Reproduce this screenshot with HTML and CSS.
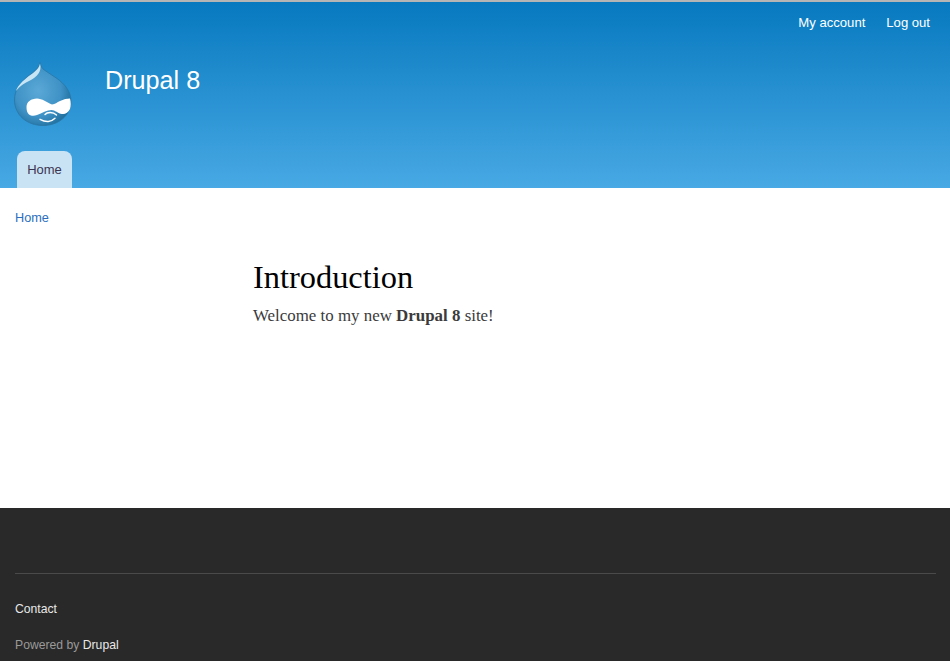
FILE: index.html
```html
<!DOCTYPE html>
<html lang="en">
<head>
<meta charset="utf-8">
<title>Drupal 8</title>
<link rel="stylesheet" href="styles.css">
</head>
<body>
<div class="chrome-line"></div>
<header class="header">
  <nav class="secondary"><a href="#">My account</a><a href="#">Log out</a></nav>
  <div class="branding">
    <svg class="logo" width="58" height="66" viewBox="0 0 58 66">
      <defs>
        <radialGradient id="drop" cx="0.42" cy="0.45" r="0.62">
          <stop offset="0" stop-color="#5aa8d6"/>
          <stop offset="0.65" stop-color="#3f92c6"/>
          <stop offset="1" stop-color="#1f6f9e"/>
        </radialGradient>
      </defs>
      <path d="M26 2.500C26.500 6 28 8.500 31 10.500C35 13.500 39 15.500 43 18.500C50 23.500 57 31 57 41C57 55 45 65.500 29 65.500C13 65.500 0.500 55 0.500 40C0.500 30 6 23 13 17C18 13 25 9 26 2.500Z" fill="url(#drop)" stroke="#2a76a6" stroke-width="0.800"/>
      <path d="M26 3.500C25 10 18 13.500 12.500 18C7 22.500 3 27 2 31C6 26 10.500 23 16 20.500C22 17.500 28.500 12 26 3.500Z" fill="#cfe9f6" opacity="0.95"/>
      <path d="M12.500 47C12.500 42 17 38.500 23 38.500C28 38.500 33 42.500 38 44.500C41 44 43 42.500 46 41C49.500 39.300 53 38.500 56 38.500C57 42 57 46 56 49C54 53 51 54.500 48 54C44 53.500 41 50 37.500 50C33 50 28 53 23 55C20 56.300 17 56 15 54.500C13 53 12.500 50 12.500 47Z" fill="#fff"/>
      <path d="M31 54.500C33 52 39 51.500 42.500 55" fill="none" stroke="#fff" stroke-width="1.400" stroke-linecap="round"/>
      <path d="M26 59.300C29 61 31.500 61.700 34.300 61.500C37 61.200 39.500 59.800 41 58.300" fill="none" stroke="#fff" stroke-width="1.400" stroke-linecap="round"/>
    </svg>
    <div class="site-name">Drupal 8</div>
  </div>
  <nav class="primary"><a class="tab" href="#">Home</a></nav>
</header>
<main class="main">
  <div class="breadcrumb"><a href="#">Home</a></div>
  <article class="content">
    <h1>Introduction</h1>
    <p>Welcome to my new <strong>Drupal 8</strong> site!</p>
  </article>
</main>
<footer class="footer">
  <div class="footer-inner">
    <a class="contact" href="#">Contact</a>
    <div class="powered">Powered by <a href="#">Drupal</a></div>
  </div>
</footer>
</body>
</html>
```
FILE: styles.css
```css
* { box-sizing: border-box; }
html, body { margin: 0; padding: 0; height: 100%; }
body {
  width: 950px;
  height: 661px;
  overflow: hidden;
  background: #fff;
  font-family: "Liberation Sans", Arial, sans-serif;
  display: flex;
  flex-direction: column;
}
a { text-decoration: none; }
.chrome-line { height: 2px; background: #b5b5b5; flex: none; }
.header {
  height: 186px;
  flex: none;
  background: linear-gradient(#0779bf, #48a9e4);
  display: flex;
  flex-direction: column;
}
.secondary {
  display: flex;
  justify-content: flex-end;
  gap: 21px;
  padding: 13px 20px 0 0;
  font-size: 13.1px;
  line-height: 16px;
}
.secondary a { color: #fff; }
.branding {
  display: flex;
  align-items: flex-start;
  padding: 29px 0 0 14px;
  height: 105px;
}
.logo { display: block; flex: none; }
.site-name {
  margin: 5px 0 0 33px;
  font-size: 25.2px;
  line-height: 30px;
  color: #fff;
}
.primary { padding-left: 17px; display: flex; flex: 1; align-items: flex-end; }
.tab {
  display: block;
  width: 55px;
  height: 37px;
  background: #c9e3f5;
  border-radius: 8px 8px 0 0;
  color: #3c3550;
  font-size: 13px;
  line-height: 37px;
  text-align: center;
}
.main { flex: 1; min-height: 0; }
.breadcrumb { padding: 23px 0 0 15px; font-size: 12.7px; line-height: 15px; }
.breadcrumb a { color: #2a6fc0; }
.content { padding: 32px 0 0 253px; font-family: "Liberation Serif", Georgia, serif; }
.content h1 {
  margin: 0;
  font-weight: 400;
  font-size: 32.4px;
  line-height: 38px;
  color: #000;
}
.content p {
  margin: 10px 0 0;
  font-size: 16.9px;
  line-height: 20px;
  color: #3b3b3b;
}
.footer { height: 153px; flex: none; background: #292929; padding: 65px 14px 0 15px; }
.footer-inner { border-top: 1px solid #4a4a4a; padding-top: 28px; }
.contact { display: block; color: #e8e8e8; font-size: 12.2px; line-height: 15px; }
.powered { margin-top: 21px; color: #9a9a9a; font-size: 12.2px; line-height: 15px; }
.powered a { color: #e8e8e8; }
```
